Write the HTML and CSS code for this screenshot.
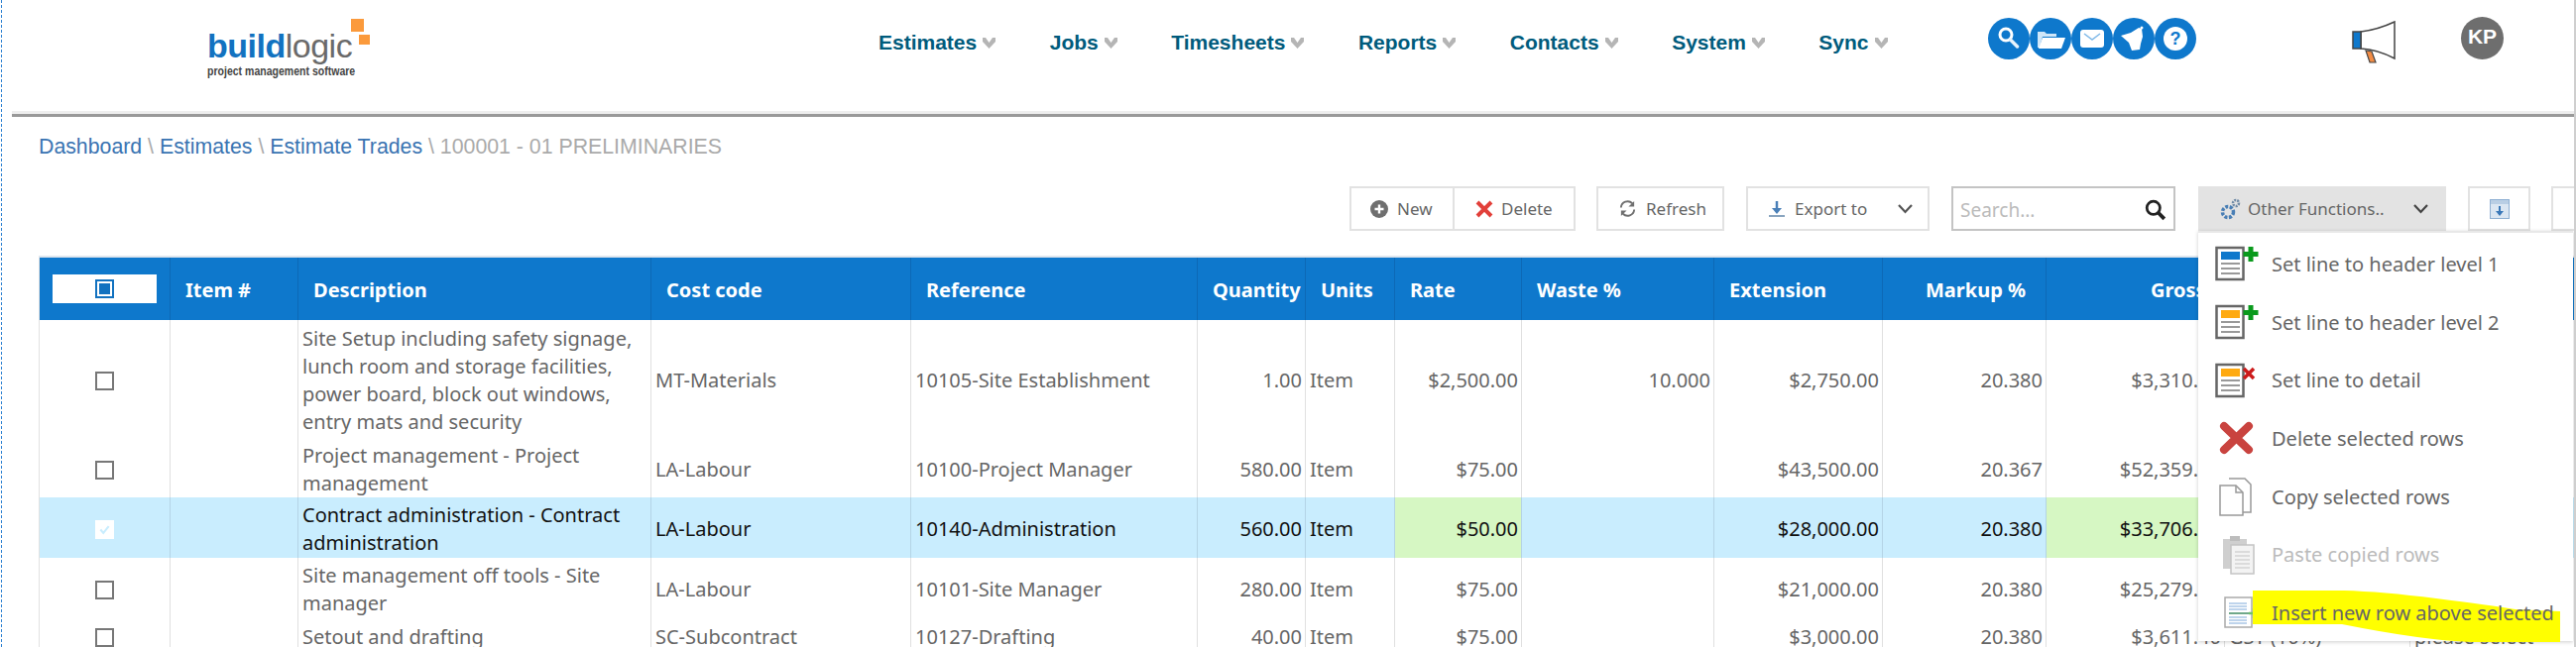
FILE: index.html
```html
<!DOCTYPE html>
<html lang="en">
<head>
<meta charset="utf-8">
<title>Estimate Trades</title>
<link rel="stylesheet" href="styles.css">
</head>
<body>
<header class="topbar">
  <div class="logo">
    <div class="logo-word"><span class="logo-build">build</span><span class="logo-logic">logic</span></div>
    <div class="logo-tag">project management software</div>
    <span class="logo-sq logo-sq-a"></span><span class="logo-sq logo-sq-b"></span>
  </div>
  <nav class="nav">
    <a class="nav-item">Estimates<svg class="nav-chev" viewBox="0 0 13 11"><polygon points="0,0 3,0 6.5,5 10,0 13,0 13,4 6.5,11 0,4"/></svg></a>
    <a class="nav-item">Jobs<svg class="nav-chev" viewBox="0 0 13 11"><polygon points="0,0 3,0 6.5,5 10,0 13,0 13,4 6.5,11 0,4"/></svg></a>
    <a class="nav-item">Timesheets<svg class="nav-chev" viewBox="0 0 13 11"><polygon points="0,0 3,0 6.5,5 10,0 13,0 13,4 6.5,11 0,4"/></svg></a>
    <a class="nav-item">Reports<svg class="nav-chev" viewBox="0 0 13 11"><polygon points="0,0 3,0 6.5,5 10,0 13,0 13,4 6.5,11 0,4"/></svg></a>
    <a class="nav-item">Contacts<svg class="nav-chev" viewBox="0 0 13 11"><polygon points="0,0 3,0 6.5,5 10,0 13,0 13,4 6.5,11 0,4"/></svg></a>
    <a class="nav-item">System<svg class="nav-chev" viewBox="0 0 13 11"><polygon points="0,0 3,0 6.5,5 10,0 13,0 13,4 6.5,11 0,4"/></svg></a>
    <a class="nav-item">Sync<svg class="nav-chev" viewBox="0 0 13 11"><polygon points="0,0 3,0 6.5,5 10,0 13,0 13,4 6.5,11 0,4"/></svg></a>
  </nav>
  <div class="round-icons">
    <svg class="round" viewBox="0 0 42 42"><circle cx="21" cy="21" r="21" fill="#0e78cc"/><circle cx="18" cy="17" r="6" fill="none" stroke="#fff" stroke-width="3"/><path d="M22.500 22l7 7" stroke="#e8f3fb" stroke-width="3.500" stroke-linecap="round"/></svg>
    <svg class="round" viewBox="0 0 42 42"><circle cx="21" cy="21" r="21" fill="#0e78cc"/><path d="M8 14h7l2 2h10v3H13l-3 11H8z" fill="#cfe6f8"/><path d="M13 20h23l-4 11H9z" fill="#fff"/></svg>
    <svg class="round" viewBox="0 0 42 42"><circle cx="21" cy="21" r="21" fill="#0e78cc"/><rect x="9" y="12" width="24" height="18" rx="3" fill="#fff"/><path d="M13 16l8 6 8-6" fill="none" stroke="#7db8e8" stroke-width="1.500"/></svg>
    <svg class="round" viewBox="0 0 42 42"><circle cx="21" cy="21" r="21" fill="#0e78cc"/><path d="M8 18l10-3 8-5 3 1 1 8-2 7-1 6-8 1-3-8z" fill="#fff"/><circle cx="29" cy="10" r="1.500" fill="#fff"/></svg>
    <svg class="round" viewBox="0 0 42 42"><circle cx="21" cy="21" r="21" fill="#0e78cc"/><circle cx="21" cy="21" r="12" fill="#fff"/><text class="q-mark" x="21" y="27" text-anchor="middle">?</text></svg>
  </div>
  <svg class="megaphone" viewBox="0 0 44 43"><path d="M9 11 Q26 9 43 1 V38 Q26 29 9 28z" fill="#fff" stroke="#444" stroke-width="1.500"/><rect x="1" y="11" width="8" height="17" fill="#0e78cc" stroke="#444" stroke-width="1.500"/><path d="M14 30l6 1 4 11h-6z" fill="#f28c45" stroke="#444" stroke-width="1.200"/></svg>
  <div class="avatar">KP</div>
</header>
<div class="rule"></div>
<div class="crumbs"><a>Dashboard</a> <span class="crumb-sep">\</span> <a>Estimates</a> <span class="crumb-sep">\</span> <a>Estimate Trades</a> <span class="crumb-sep">\</span> <span class="crumb-now">100001 - 01 PRELIMINARIES</span></div>
<div class="toolbar">
  <div class="btn-group">
    <button class="btn btn-new"><svg class="ic ic-18" viewBox="0 0 18 18"><circle cx="9" cy="9" r="9" fill="#6f6f6f"/><path d="M9 4.500v9M4.500 9h9" stroke="#fff" stroke-width="2.400"/></svg>New</button>
    <button class="btn btn-del"><svg class="ic ic-18" viewBox="0 0 18 16"><path d="M2 1l14 14M16 1L2 15" stroke="#e2403a" stroke-width="4"/></svg>Delete</button>
  </div>
  <button class="btn btn-solo btn-refresh"><svg class="ic ic-19" viewBox="0 0 20 20"><path d="M3 9a7 7 0 0 1 12-4.500" fill="none" stroke="#707070" stroke-width="2"/><path d="M17 2v6h-6z" fill="#707070"/><path d="M17 11a7 7 0 0 1-12 4.500" fill="none" stroke="#707070" stroke-width="2"/><path d="M3 18v-6h6z" fill="#707070"/></svg>Refresh</button>
  <button class="btn btn-solo btn-export"><svg class="ic ic-16" viewBox="0 0 16 16"><path d="M8 0v9" stroke="#4a80b8" stroke-width="2.500"/><path d="M3 7h10l-5 6z" fill="#4a80b8"/><path d="M0 15h16" stroke="#8aa5c0" stroke-width="2"/></svg><span class="btn-label">Export to</span><svg class="chev" viewBox="0 0 15 10"><path d="M1 1l6.500 7L14 1" fill="none" stroke="#555" stroke-width="2.200"/></svg></button>
  <div class="search"><span>Search...</span><svg class="search-ic" viewBox="0 0 20 20"><circle cx="8" cy="8" r="6" fill="none" stroke="#222" stroke-width="2.500"/><path d="M12.500 12.500L18 18" stroke="#222" stroke-width="3.500"/></svg></div>
  <div class="other">
    <button class="btn btn-other"><svg class="ic ic-21" viewBox="0 0 21 22"><circle cx="8" cy="14" r="5.500" fill="none" stroke="#4a7fb5" stroke-width="3.500" stroke-dasharray="3 1.500"/><circle cx="16" cy="5" r="3" fill="none" stroke="#6f8aa5" stroke-width="2.500" stroke-dasharray="2 1"/></svg><span class="btn-label">Other Functions..</span><svg class="chev" viewBox="0 0 15 10"><path d="M1 1l6.500 7L14 1" fill="none" stroke="#444" stroke-width="2.200"/></svg></button>
    <ul class="menu">
      <li class="menu-item"><span class="menu-ic"><svg viewBox="0 0 44 36"><rect x="1.500" y="2" width="27" height="32" fill="#fff" stroke="#666" stroke-width="2.500"/><rect x="6" y="6" width="19" height="8" fill="#0e78cc"/><path d="M6 18h19M6 23h19M6 28h19" stroke="#999" stroke-width="2"/><path d="M36 1v15M28.500 8.500h15" stroke="#0a9a1c" stroke-width="5"/></svg></span>Set line to header level 1</li>
      <li class="menu-item"><span class="menu-ic"><svg viewBox="0 0 44 36"><rect x="1.500" y="2" width="27" height="32" fill="#fff" stroke="#666" stroke-width="2.500"/><rect x="6" y="6" width="19" height="8" fill="#ffaa11"/><path d="M6 18h19M6 23h19M6 28h19" stroke="#999" stroke-width="2"/><path d="M36 1v15M28.500 8.500h15" stroke="#0a9a1c" stroke-width="5"/></svg></span>Set line to header level 2</li>
      <li class="menu-item"><span class="menu-ic"><svg viewBox="0 0 44 36"><rect x="1.500" y="2" width="27" height="32" fill="#fff" stroke="#666" stroke-width="2.500"/><rect x="6" y="6" width="19" height="8" fill="#ffaa11"/><path d="M6 18h19M6 23h19M6 28h19" stroke="#999" stroke-width="2"/><path d="M29 6l10 10M39 6L29 16" stroke="#cc1a1a" stroke-width="3.500"/></svg></span>Set line to detail</li>
      <li class="menu-item"><span class="menu-ic"><svg viewBox="0 0 44 36"><path d="M9 6l25 24M34 6L9 30" stroke="#c9433f" stroke-width="8" stroke-linecap="round"/></svg></span>Delete selected rows</li>
      <li class="menu-item"><span class="menu-ic"><svg viewBox="0 0 44 40"><path d="M14 2h16l6 6v28h-8" fill="#fff" stroke="#999" stroke-width="1.500"/><path d="M5 9h16l7 7v23H5z" fill="#fff" stroke="#999" stroke-width="1.500"/><path d="M21 9v7h7" fill="none" stroke="#999" stroke-width="1.500"/></svg></span>Copy selected rows</li>
      <li class="menu-item menu-off"><span class="menu-ic"><svg viewBox="0 0 44 40"><rect x="8" y="4" width="24" height="30" fill="#cfcfcf"/><rect x="15" y="1" width="10" height="5" fill="#bdbdbd"/><rect x="16" y="10" width="23" height="29" fill="#f3f3f3" stroke="#c4c4c4" stroke-width="1.500"/><path d="M20 17h15M20 21h15M20 25h15M20 29h15M20 33h15" stroke="#c4c4c4" stroke-width="1.200"/></svg></span>Paste copied rows</li>
      <li class="menu-item menu-hl">
        <svg class="marker" viewBox="0 0 310 52" preserveAspectRatio="none"><path d="M0 0H92Q130 1 185 8T265 19L310 21V52H220Q170 50 90 34H0z" fill="#ffff00"/></svg>
        <span class="menu-ic"><svg viewBox="0 0 44 34"><rect x="10" y="2" width="27" height="30" fill="#fff" stroke="#aaa" stroke-width="1.500"/><path d="M14 8h18M14 11h18M14 14h18M14 22h18M14 25h18M14 28h18" stroke="#a9c6e6" stroke-width="1.500"/><path d="M14 18h20" stroke="#6fa88a" stroke-width="2"/><path d="M39 13v10M34 18h10" stroke="#6fc06f" stroke-width="2.500"/></svg></span><span class="menu-text">Insert new row above selected</span>
      </li>
    </ul>
  </div>
  <button class="btn btn-icon btn-icon-a"><svg class="ic-20" viewBox="0 0 20 20"><rect x="0.500" y="0.500" width="19" height="19" fill="#dbe6f2" stroke="#8fb0d3"/><rect x="1" y="1" width="18" height="4" fill="#b9cee4"/><path d="M10 7v7" stroke="#3a78b8" stroke-width="2"/><path d="M6 12h8l-4 5z" fill="#3a78b8"/></svg></button>
  <button class="btn btn-icon btn-icon-b"></button>
</div>
<main class="grid-wrap">
  <table class="grid">
    <colgroup>
      <col class="c-check"><col class="c-item"><col class="c-desc"><col class="c-cost"><col class="c-ref"><col class="c-qty"><col class="c-units"><col class="c-rate"><col class="c-waste"><col class="c-ext"><col class="c-mark"><col class="c-gross"><col class="c-tax"><col class="c-sel">
    </colgroup>
    <thead>
      <tr>
        <th class="th-check"><span class="all-box"><span class="box box-all"></span></span></th>
        <th>Item #</th><th>Description</th><th>Cost code</th><th>Reference</th><th>Quantity</th><th>Units</th><th>Rate</th><th>Waste %</th><th>Extension</th><th class="th-mark">Markup %</th><th class="th-gross">Gross</th><th>Tax</th><th>Type</th>
      </tr>
    </thead>
    <tbody>
      <tr class="r-a">
        <td class="td-check"><span class="box"></span></td><td></td>
        <td>Site Setup including safety signage, lunch room and storage facilities, power board, block out windows, entry mats and security</td>
        <td>MT-Materials</td><td>10105-Site Establishment</td><td class="num">1.00</td><td>Item</td><td class="num">$2,500.00</td><td class="num">10.000</td><td class="num">$2,750.00</td><td class="num">20.380</td><td class="num">$3,310.45</td><td>GST (10%)</td><td>please select</td>
      </tr>
      <tr class="r-b">
        <td class="td-check"><span class="box"></span></td><td></td>
        <td>Project management - Project management</td>
        <td>LA-Labour</td><td>10100-Project Manager</td><td class="num">580.00</td><td>Item</td><td class="num">$75.00</td><td class="num"></td><td class="num">$43,500.00</td><td class="num">20.367</td><td class="num">$52,359.65</td><td>GST (10%)</td><td>please select</td>
      </tr>
      <tr class="r-c is-selected">
        <td class="td-check"><span class="box box-on"><svg viewBox="0 0 18 18"><path d="M4 9l3.500 4L14 5" fill="none" stroke="#c9edfe" stroke-width="2.500"/></svg></span></td><td></td>
        <td>Contract administration - Contract administration</td>
        <td>LA-Labour</td><td>10140-Administration</td><td class="num">560.00</td><td>Item</td><td class="num is-changed">$50.00</td><td class="num"></td><td class="num">$28,000.00</td><td class="num">20.380</td><td class="num is-changed">$33,706.40</td><td>GST (10%)</td><td>please select</td>
      </tr>
      <tr class="r-c">
        <td class="td-check"><span class="box"></span></td><td></td>
        <td>Site management off tools - Site manager</td>
        <td>LA-Labour</td><td>10101-Site Manager</td><td class="num">280.00</td><td>Item</td><td class="num">$75.00</td><td class="num"></td><td class="num">$21,000.00</td><td class="num">20.380</td><td class="num">$25,279.80</td><td>GST (10%)</td><td>please select</td>
      </tr>
      <tr class="r-d">
        <td class="td-check"><span class="box"></span></td><td></td>
        <td>Setout and drafting</td>
        <td>SC-Subcontract</td><td>10127-Drafting</td><td class="num">40.00</td><td>Item</td><td class="num">$75.00</td><td class="num"></td><td class="num">$3,000.00</td><td class="num">20.380</td><td class="num">$3,611.40</td><td>GST (10%)</td><td>please select</td>
      </tr>
    </tbody>
  </table>
</main>
</body>
</html>
```
FILE: styles.css
```css
* { box-sizing: border-box; }
html, body { height: 653px; overflow: hidden; }
body {
  margin: 0 0 0 1px;
  border-left: 1px dashed #2a7fd0;
  border-right: 2px solid #cfcfcf;
  background: #fff;
  color: #666;
  font-family: "Noto Sans", "Liberation Sans", sans-serif;
  font-size: 17px;
}

/* top bar */
.topbar {
  height: 112px;
  display: flex;
  align-items: flex-start;
  padding-left: 207px;
}
.logo { position: relative; width: 167px; height: 77px; margin-top: 19px; flex: none; }
.logo-word { font-family: "Liberation Sans", sans-serif; font-size: 34px; line-height: 38px; margin-top: 8px; letter-spacing: -0.5px; }
.logo-build { color: #1272c0; font-weight: 700; }
.logo-logic { color: #6a6a6a; }
.logo-tag { font-family: "Liberation Sans", sans-serif; font-weight: 700; font-size: 13px; color: #444; line-height: 13px; white-space: nowrap; transform: scaleX(0.81); transform-origin: left center; }
.logo-sq { position: absolute; background: #fb9a3c; }
.logo-sq-a { left: 145px; top: 0; width: 13px; height: 13px; }
.logo-sq-b { left: 153px; top: 16px; width: 11px; height: 10px; }

.nav { display: flex; gap: 54.500px; margin-left: 510px; margin-top: 31px; flex: none; }
.nav-item {
  display: flex;
  align-items: center;
  gap: 6px;
  font-family: "Liberation Sans", sans-serif;
  font-weight: 700;
  font-size: 21px;
  line-height: 24px;
  color: #005b7c;
}
.nav-chev { width: 13px; height: 11px; fill: #b5b5b5; }

.round-icons { display: flex; margin-left: 0; margin-top: 18px; flex: none; position: absolute; left: 2005px; }
.round { width: 42px; height: 42px; display: block; }
.q-mark { font-family: "Liberation Sans", sans-serif; font-size: 18px; font-weight: 700; fill: #0e78cc; }
.megaphone { position: absolute; left: 2372px; top: 21px; width: 44px; height: 43px; }
.avatar {
  position: absolute;
  left: 2482px;
  top: 17px;
  width: 43px;
  height: 43px;
  border-radius: 50%;
  background: #6e6e6e;
  color: #fff;
  font-family: "Liberation Sans", sans-serif;
  font-weight: 700;
  font-size: 21px;
  line-height: 40px;
  text-align: center;
}
.rule { height: 6px; margin: 0 0 0 10px; border-top: 3px solid #eee; background: #999; }

/* breadcrumb */
.crumbs {
  margin: 18px 0 0 37px;
  font-family: "Liberation Sans", sans-serif;
  font-size: 21.300px;
  line-height: 24px;
  color: #aaa;
  height: 24px;
}
.crumbs a { color: #3a74b2; }
.crumb-sep { color: #aaa; }
.crumb-now { color: #aaa; }

/* toolbar */
.toolbar {
  display: flex;
  justify-content: flex-end;
  height: 45px;
  margin-top: 28px;
  padding-right: 0;
}
.btn {
  display: flex;
  align-items: center;
  height: 45px;
  padding: 0;
  background: #fff;
  border: 2px solid #e2e2e2;
  font-family: "Noto Sans", sans-serif;
  font-size: 17px;
  color: #666;
}
.btn-group { display: flex; width: 228px; flex: none; }
.btn-new { width: 105px; padding-left: 19px; gap: 9px; border-right: 1px solid #e2e2e2; }
.btn-del { width: 123px; padding-left: 21px; gap: 8px; border-left: 1px solid #e2e2e2; }
.btn-solo { margin-left: 21px; flex: none; }
.btn-refresh { width: 129px; padding-left: 20px; gap: 9px; }
.btn-export { width: 185px; padding-left: 21px; gap: 10px; margin-left: 22px; }
.btn-label { white-space: nowrap; }
.btn-export .chev { margin-left: 21px; }
.ic { flex: none; }
.ic-16 { width: 16px; height: 16px; }
.ic-18 { width: 18px; height: 18px; }
.ic-19 { width: 19px; height: 19px; }
.ic-20 { width: 20px; height: 20px; display: block; }
.ic-21 { width: 21px; height: 22px; }
.chev { width: 15px; height: 10px; flex: none; }
.search {
  display: flex;
  align-items: center;
  justify-content: space-between;
  width: 226px;
  height: 45px;
  margin-left: 22px;
  padding: 2px 7px 0 7px;
  border: 2px solid #c4c4c4;
  font-size: 19px;
  color: #bbb;
  flex: none;
}
.search-ic { width: 22px; height: 22px; }
.other { position: relative; margin-left: 23px; width: 250px; flex: none; z-index: 5; }
.btn-other {
  width: 250px;
  padding-left: 20px;
  gap: 7px;
  background: #e3e3e3;
  border: 2px solid #e3e3e3;
}
.btn-other .chev { margin-left: 22px; }
.btn-icon { flex: none; justify-content: center; }
.btn-icon-a { width: 63px; margin-left: 22px; }
.btn-icon-b { width: 23px; margin-left: 21px; border-right: 0; }

/* dropdown */
.menu {
  position: absolute;
  left: 0;
  top: 45px;
  width: 378px;
  height: 414px;
  margin: 0;
  padding: 2px 0 0;
  list-style: none;
  background: #fff;
  border-top: 2px solid #e8e8e8;
  box-shadow: 0 1px 4px rgba(0, 0, 0, 0.2);
  font-size: 20px;
  color: #666;
}
.menu-item {
  position: relative;
  display: flex;
  align-items: center;
  height: 58.700px;
  padding-left: 17px;
  white-space: nowrap;
}
.menu-ic { display: block; width: 44px; margin-right: 13px; flex: none; }
.menu-ic svg { display: block; width: 44px; height: auto; }
.menu-off { color: #bbb; }
.menu-text { position: relative; }
.marker { position: absolute; left: 55px; top: 7px; width: 310px; height: 52px; }

/* table */
.grid-wrap { margin: 25px 0 0 37px; }
.grid {
  table-layout: fixed;
  width: 2558px;
  border-collapse: collapse;
  border-top: 2px solid #dfe6ee;
  border-left: 1px solid #e2e2e2;
}
.c-check { width: 132px; }
.c-item { width: 129px; }
.c-desc { width: 356px; }
.c-cost { width: 262px; }
.c-ref { width: 289px; }
.c-qty { width: 109px; }
.c-units { width: 90px; }
.c-rate { width: 128px; }
.c-waste { width: 194px; }
.c-ext { width: 170px; }
.c-mark { width: 165px; }
.c-gross { width: 180px; }
.c-tax { width: 187px; }
.c-sel { width: 167px; }
.grid th {
  height: 64px;
  padding: 2px 0 0 15px;
  background: #0e78cc;
  border-right: 1px solid #0d69b6;
  color: #fff;
  font-weight: 700;
  font-size: 20px;
  text-align: left;
  white-space: nowrap;
}
.grid .th-check { padding: 0 0 0 13px; }
.grid .th-mark { padding-left: 43px; }
.grid .th-gross { padding-left: 105px; }
.all-box { display: flex; align-items: center; justify-content: center; width: 105px; height: 29px; background: #fff; }
.grid td {
  padding: 2px 3px 0 4px;
  font-size: 20px;
  line-height: 28px;
  border-right: 1px solid #e0e0e0;
  vertical-align: middle;
}
.r-a td { height: 120px; }
.r-b td { height: 59px; }
.r-c td { height: 61px; }
.r-d td { height: 36px; white-space: nowrap; }
.grid .num { text-align: right; }
.grid .td-check { text-align: center; padding: 0; }
.box {
  display: inline-block;
  width: 19px;
  height: 19px;
  border: 2px solid #777;
  background: #fff;
  vertical-align: middle;
}
.box-all { border-color: #1272c0; background: #1272c0; box-shadow: inset 0 0 0 2px #fff; }
.box-on { border-color: #fff; background: #fff; }
.box-on svg { display: block; width: 15px; height: 15px; }
.is-selected td { background: #c9edfe; color: #111; border-right-color: #b4d4e6; }
.grid .is-changed { background: #d6f7c3; }
```
